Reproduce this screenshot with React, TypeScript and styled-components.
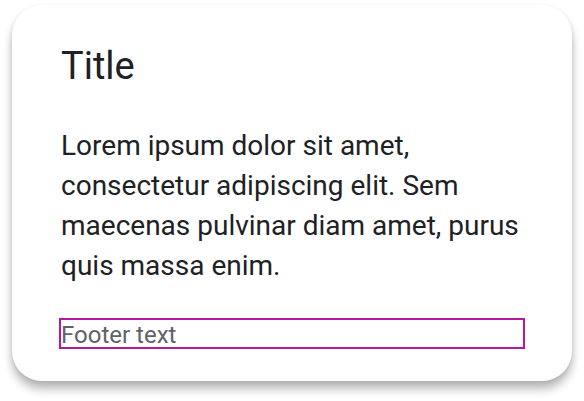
import React from "react";
import styled, { createGlobalStyle } from "styled-components";

const Global = createGlobalStyle`
  html, body { margin: 0; padding: 0; background: #ffffff; }
  body { font-family: Roboto, "Noto Sans", Arial, sans-serif; }
`;

const Page = styled.div`
  padding: 5px 12px 20px 12px;
  width: 584px;
  box-sizing: border-box;
`;

const Card = styled.div`
  width: 560px;
  height: 376px;
  box-sizing: border-box;
  background: #ffffff;
  border-radius: 30px;
  box-shadow: 0 8px 10px rgba(0, 0, 0, 0.28), 0 1px 4px rgba(0, 0, 0, 0.08);
  padding: 39px 49px 0 49px;
  display: flex;
  flex-direction: column;
`;

const Title = styled.h1`
  margin: 0;
  font-size: 38px;
  line-height: 44px;
  font-weight: 400;
  color: #202124;
`;

const Body = styled.p`
  margin: 38px 0 0 0;
  font-size: 28px;
  line-height: 40px;
  font-weight: 400;
  color: #202124;
`;

const Footer = styled.div`
  margin-top: 34px;
  height: 27px;
  outline: 2px solid #b5179e;
  font-size: 24px;
  line-height: 30px;
  color: #5f6368;
`;

export default function App() {
  return (
    <>
      <Global />
      <Page>
        <Card>
          <Title>Title</Title>
          <Body>
            Lorem ipsum dolor sit amet, consectetur adipiscing elit. Sem maecenas pulvinar diam amet, purus quis
            massa enim.
          </Body>
          <Footer>Footer text</Footer>
        </Card>
      </Page>
    </>
  );
}
